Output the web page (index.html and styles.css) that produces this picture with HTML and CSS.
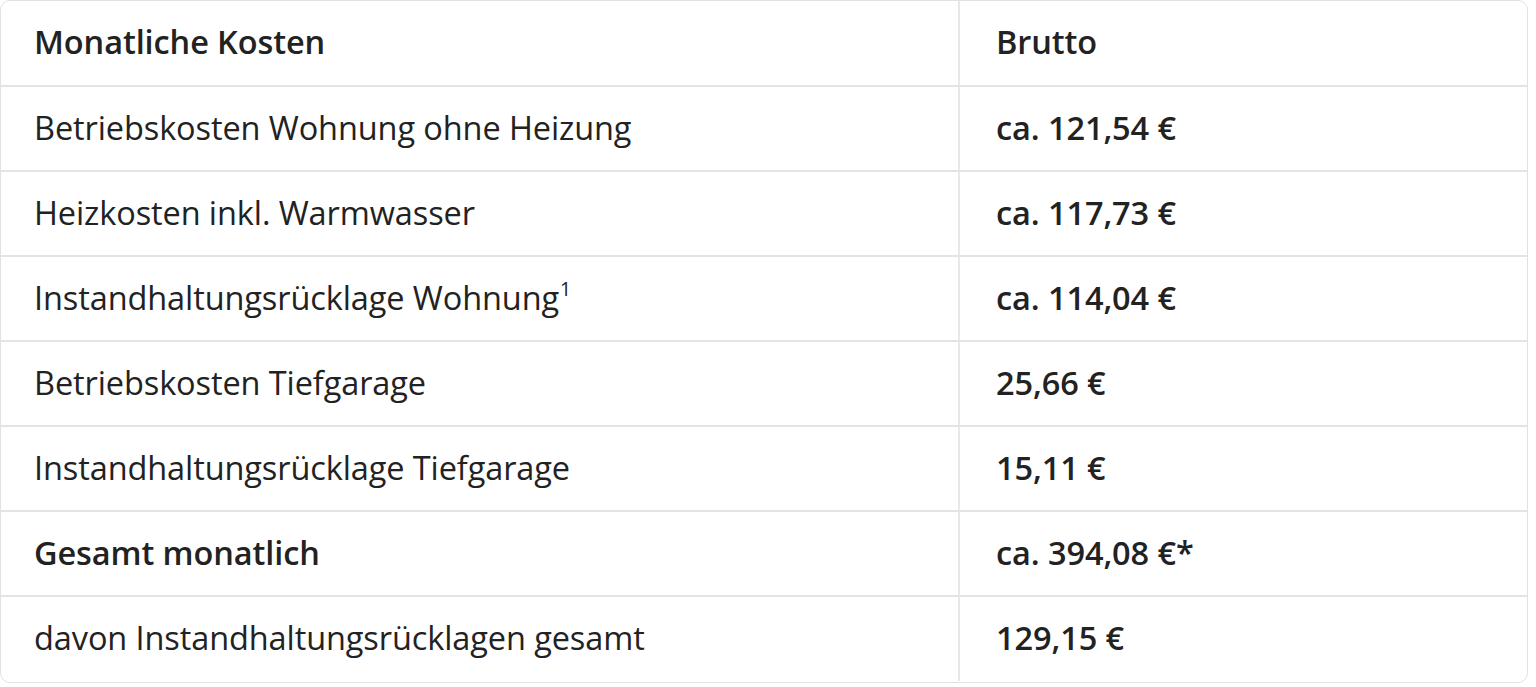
FILE: index.html
```html
<!DOCTYPE html>
<html lang="de">
<head>
<meta charset="utf-8">
<link rel="stylesheet" href="styles.css">
</head>
<body>
<div class="wrap">
<table class="costs">
<thead>
<tr><th class="c1">Monatliche Kosten</th><th class="c2">Brutto</th></tr>
</thead>
<tbody>
<tr><td class="c1">Betriebskosten Wohnung ohne Heizung</td><td class="c2 val">ca. 121,54 €</td></tr>
<tr><td class="c1">Heizkosten inkl. Warmwasser</td><td class="c2 val">ca. 117,73 €</td></tr>
<tr><td class="c1">Instandhaltungsrücklage Wohnung<sup>1</sup></td><td class="c2 val">ca. 114,04 €</td></tr>
<tr><td class="c1">Betriebskosten Tiefgarage</td><td class="c2 val">25,66 €</td></tr>
<tr><td class="c1">Instandhaltungsrücklage Tiefgarage</td><td class="c2 val">15,11 €</td></tr>
<tr><td class="c1 strong">Gesamt monatlich</td><td class="c2 val">ca. 394,08 €*</td></tr>
<tr><td class="c1">davon Instandhaltungsrücklagen gesamt</td><td class="c2 val">129,15 €</td></tr>
</tbody>
</table>
</div>
</body>
</html>
```
FILE: styles.css
```css
html, body { margin: 0; padding: 0; background: #fff; }
body { font-family: "Open Sans", "Liberation Sans", sans-serif; color: #222; }
.wrap {
  width: 1528px;
  height: 683px;
  box-sizing: border-box;
  border: 1.5px solid #e2e2e2;
  border-radius: 10px;
  overflow: hidden;
}
.costs {
  width: 100%;
  border-collapse: collapse;
  font-size: 32.5px;
  letter-spacing: -0.1px;
}
.costs tr { height: 85px; }
.costs th, .costs td {
  text-align: left;
  padding: 0 0 3px 33px;
  border-bottom: 2px solid #e4e4e4;
  white-space: nowrap;
}
.costs tr:last-child td { border-bottom: none; }
.costs th { font-weight: 600; }
.c1 { width: 924px; border-right: 2px solid #e8e8e8; }
.c2 { padding-left: 36px !important; }
.val, .strong { font-weight: 600; }
sup { font-size: 0.6em; vertical-align: 0; position: relative; top: -0.7em; margin-left: 1px; }
```
